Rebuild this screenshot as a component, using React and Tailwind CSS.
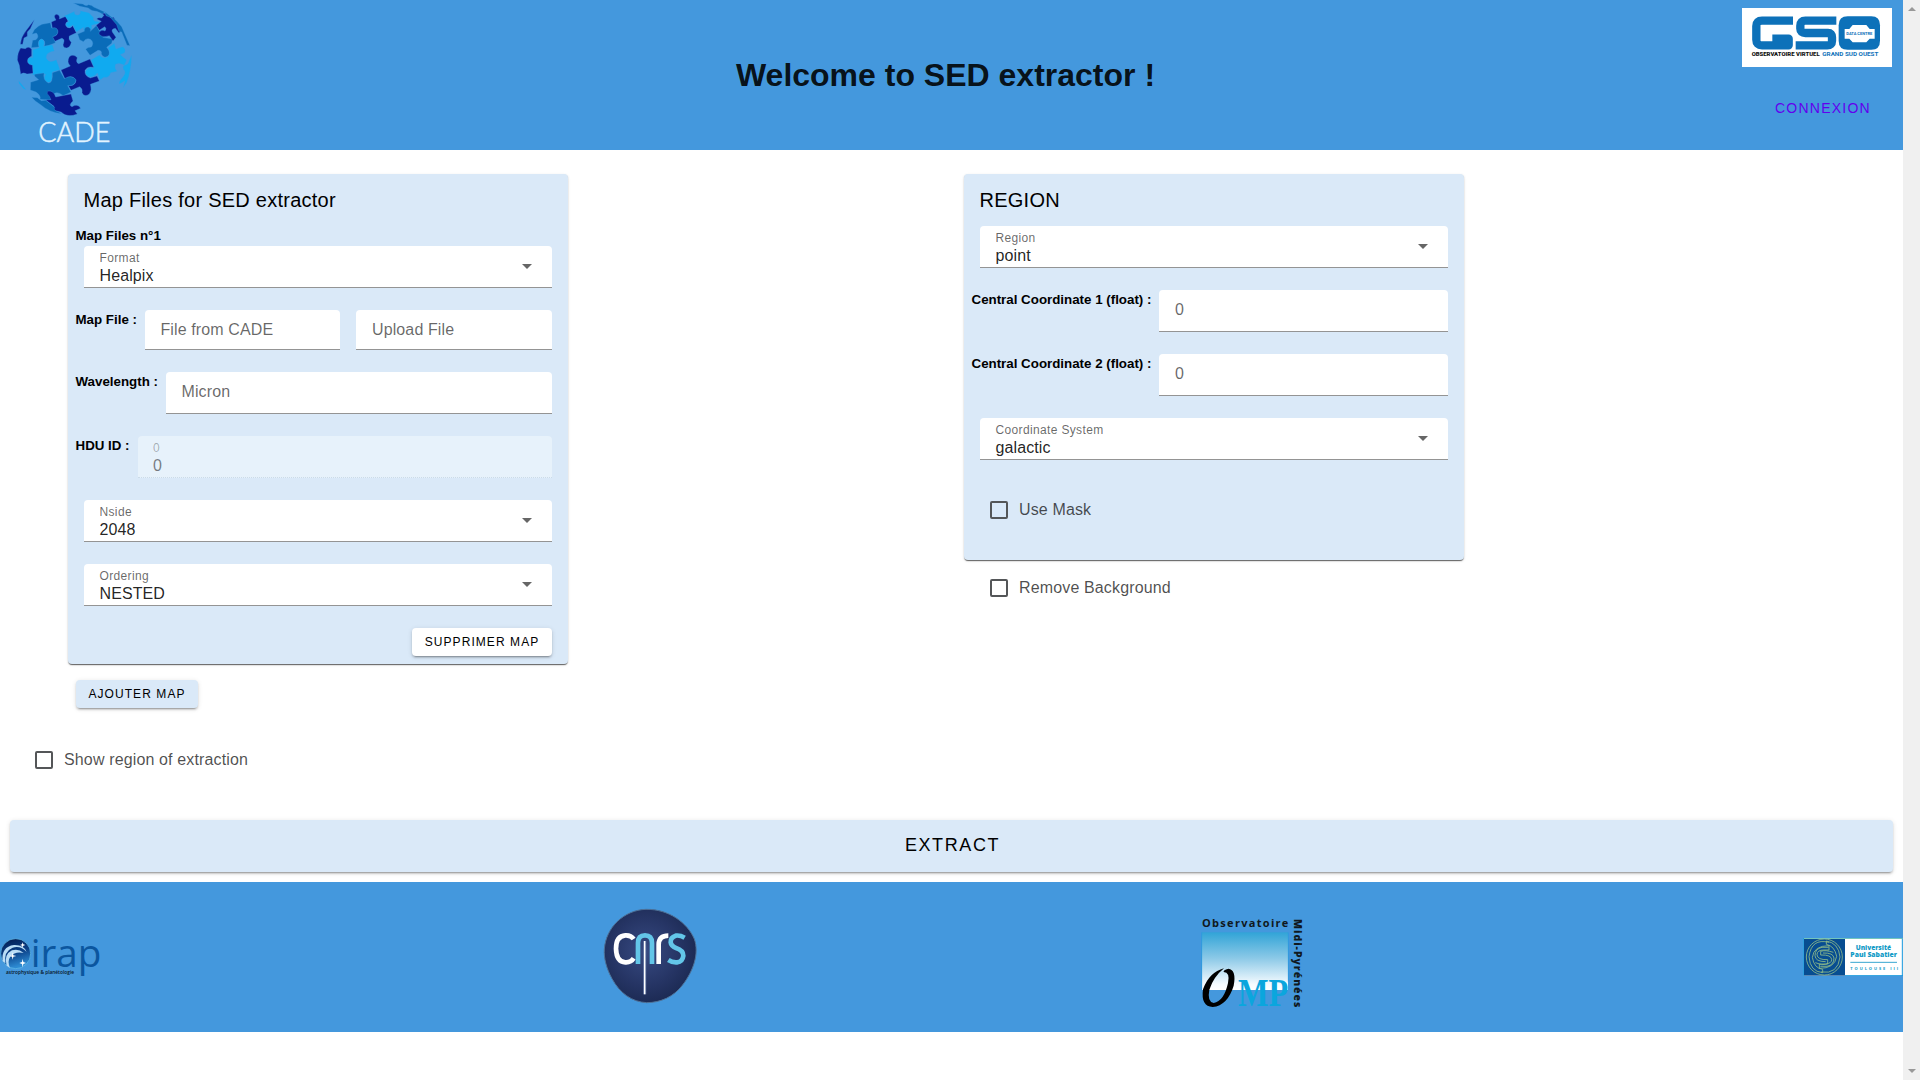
import React from "react";

const cardShadow =
  "shadow-[0_2px_1px_-1px_rgba(0,0,0,0.4),0_1px_1px_rgba(0,0,0,0.28),0_1px_3px_rgba(0,0,0,0.12)]";
const buttonShadow =
  "shadow-[0_3px_1px_-2px_rgba(0,0,0,0.2),0_2px_2px_rgba(0,0,0,0.14),0_1px_5px_rgba(0,0,0,0.12)]";

function Select({ label, value, className = "" }) {
  return (
    <div
      className={`flex h-[42px] items-center justify-between rounded-t border-b border-[#949494] bg-white pl-[15.5px] pr-[20px] ${className}`}
    >
      <div className="flex flex-col pt-[3px]">
        <span className="text-[12px] leading-[14px] tracking-[0.35px] text-black/60">{label}</span>
        <span className="mt-[1px] text-[16px] leading-[19px] tracking-[0.1px] text-black/87">{value}</span>
      </div>
      <svg className="mt-[-1px] h-[5px] w-[10px]" viewBox="0 0 10 5">
        <polygon points="0,0 10,0 5,5" fill="#666" />
      </svg>
    </div>
  );
}

function Field({ placeholder, className = "" }) {
  return (
    <div className={`rounded-t border-b border-[#949494] bg-white pl-[15.5px] pr-4 pt-[10px] ${className}`}>
      <span className="block text-[16px] leading-[19px] tracking-[0.12px] text-black/60">{placeholder}</span>
    </div>
  );
}

function Label({ children }) {
  return (
    <span className="ml-[-0.5px] mr-2 shrink-0 whitespace-nowrap pt-[2px] text-[13.333px] font-bold leading-[15px] text-black">
      {children}
    </span>
  );
}

function Checkbox({ label, className = "" }) {
  return (
    <label className={`flex h-[18px] items-center ${className}`}>
      <span className="h-[18px] w-[18px] rounded-[2px] border-2 border-[#545658]" />
      <span className="ml-[11px] text-[16px] leading-[18px] tracking-[0.14px] text-black/70">{label}</span>
    </label>
  );
}

function CadeLogo() {
  const navy = "#091b8f";
  const blue = "#0a6cb9";
  const cyan = "#10aaf0";
  return (
    <svg className="h-[150px] w-[160px]" viewBox="0 0 480 450">
      <g stroke="#4498dd" strokeWidth="1">
        <path fill={blue} d="M103 89 Q113 78 126 73 L151 68 L155 84 Q173 78 174 94 Q173 108 160 109 L166 128 L145 137 L132 140 Q139 120 124 118 Q112 121 117 141 L94 143 L98 121 L108 119 Q119 110 109 99 L96 103 Z" />
        <path fill={navy} d="M154 66 L168 60 Q158 46 169 43 Q181 45 178 57 L198 49 L204 64 Q191 71 201 82 Q211 88 218 77 L229 98 L208 108 Q204 118 214 127 Q210 144 199 144 Q185 141 191 128 Q195 117 185 115 L165 124 L158 110 Q174 108 174 93 Q170 80 157 84 Z" />
        <path fill={cyan} d="M194 47 L224 34 Q221 46 235 45 Q244 40 240 32 L267 38 L281 53 Q277 64 292 64 L301 69 L275 76 Q278 91 263 96 Q247 95 251 82 L229 96 L219 75 Q203 87 198 75 Q197 66 207 65 Z" />
        <path fill={blue} d="M233 102 L253 94 Q252 80 265 81 Q275 86 271 94 L290 76 L298 94 Q314 88 320 98 Q323 109 308 112 L338 117 L335 130 L320 142 Q334 158 325 168 Q310 177 304 162 Q307 151 294 151 L270 166 L257 148 Q263 141 274 141 Q283 129 273 119 Q260 111 250 125 L239 119 Z" />
        <path fill={navy} d="M289 76 L304 64 L290 57 Q294 51 305 54 L312 46 L304 39 Q321 38 332 53 L341 52 L350 69 L364 91 L357 99 L346 85 Q333 87 337 96 L348 112 L339 123 L328 107 Q316 111 306 109 L297 103 Q296 92 309 91 L315 93 Q321 85 314 80 L298 91 Z" />
        <path fill={cyan} d="M273 180 L298 165 Q308 178 323 171 Q334 158 324 144 L343 130 L348 147 L367 140 Q379 144 374 158 L361 164 L380 180 L373 196 Q359 187 347 193 Q342 206 352 214 L332 218 Q328 234 312 232 L300 240 L292 219 Q279 235 264 229 Q252 221 259 210 Q269 200 281 204 Z" />
        <path fill={cyan} d="M98 149 L118 143 Q111 121 124 117 Q137 120 131 139 L157 134 L163 153 Q136 157 139 174 Q147 192 169 179 L180 209 L157 216 Q155 229 156 240 Q147 254 135 243 Q129 232 137 223 L98 225 L98 200 Q81 195 82 181 Q83 170 98 173 Z" />
        <path fill={navy} d="M52 180 Q52 158 62 144 L76 146 Q87 137 95 148 L95 168 Q80 174 83 187 Q88 197 97 195 L99 220 L81 222 Q69 215 62 223 L58 196 Z" />
        <path fill={navy} d="M183 210 L211 198 Q199 185 208 170 Q220 160 232 173 Q226 187 236 191 L270 177 L281 202 Q263 197 255 211 Q253 229 271 234 L291 228 L298 243 L271 253 Q277 270 268 282 Q253 293 246 278 Q249 266 239 260 L213 271 L205 257 Q225 259 228 242 Q221 227 205 231 L195 237 Z" />
        <path fill={blue} d="M92 247 L116 239 Q100 228 104 223 L132 219 Q128 241 145 249 Q159 249 157 218 L179 211 L193 236 Q215 223 228 239 Q226 258 203 257 L213 276 L190 287 Q171 272 162 282 L170 297 L145 300 L120 298 Q124 287 108 276 L91 270 Z" />
        <path fill={navy} d="M137 300 L153 299 L148 289 Q137 279 144 273 Q161 271 167 291 L213 282 L219 303 Q204 316 216 320 Q234 310 242 325 L225 332 L232 342 Q202 354 183 336 L166 332 Q151 330 162 319 Z" />
        <path fill={blue} d="M95 292 L112 293 L124 302 L137 301 L164 322 Q159 332 174 335 L186 341 Q147 337 122 314 Q104 304 95 292 Z" />
        <path fill={blue} d="M220 9 L249 12 Q258 20 265 14 Q277 15 281 21 L314 36 L307 41 L290 34 Q275 34 265 24 L240 19 Z" />
        <path fill={navy} d="M61 133 Q63 110 79 91 L103 59 L91 86 L82 96 L82 109 L72 114 L68 133 Z" />
        <path fill={blue} d="M315 36 L350 63 L365 80 L390 137 L381 136 L365 96 L357 94 L350 74 L331 52 L318 47 Z" />
        <path fill={cyan} d="M395 165 Q394 213 380 248 L369 264 L375 242 L359 252 Q354 248 366 234 Q379 220 373 211 Q367 207 370 197 L383 192 Z" />
        <path fill={cyan} d="M56 242 L79 269 L70 266 L57 250 Z" />
      </g>
      <text x="115" y="425" fill="#e3f4ff" stroke="#e3f4ff" strokeWidth="1.5" fontFamily="Lato" fontWeight="300" fontSize="84" textLength="216" lengthAdjust="spacingAndGlyphs">CADE</text>
    </svg>
  );
}

function GsoLogo() {
  return (
    <svg className="h-[59px] w-[150px] bg-white" viewBox="0 0 450 177">
      <g fill="none" stroke="#0d71b9" strokeWidth="25" strokeLinejoin="round">
        <path d="M153 38H60Q43 38 43 54V95Q43 112 60 112H140V92H91" />
        <path d="M283 38H190Q175 38 175 53V62Q175 75 190 75H258Q270 75 270 88V99Q270 112 256 112H161" />
      </g>
      <path fill="#0d71b9" d="M317 25H388Q414 25 414 52V98Q414 125 388 125H317Q290 125 290 98V52Q290 25 317 25Z" />
      <path fill="#fff" d="M332 51H373L383 63H398V92H383L373 103H332L322 92H308V63H322Z" />
      <text x="313" y="80" fontFamily="Roboto" fontWeight="700" fontSize="12" textLength="78" fill="#0d71b9">DATA CENTRE</text>
      <text x="29" y="145" fontFamily="Roboto" fontWeight="900" fontSize="17" textLength="204" lengthAdjust="spacingAndGlyphs" fill="#111">OBSERVATOIRE VIRTUEL</text>
      <text x="241" y="145" fontFamily="Roboto" fontWeight="700" fontSize="17" textLength="168" lengthAdjust="spacingAndGlyphs" fill="#0d71b9">GRAND SUD OUEST</text>
    </svg>
  );
}

function IrapLogo() {
  return (
    <svg className="h-[80px] w-[102px]" viewBox="0 51 306 240">
      <defs>
        <linearGradient id="orb" x1="0" y1="0" x2="0.3" y2="1">
          <stop offset="0" stopColor="#03184b" />
          <stop offset="0.55" stopColor="#0a3f86" />
          <stop offset="1" stopColor="#2d8ad2" />
        </linearGradient>
      </defs>
      <circle cx="47" cy="161" r="45" fill="url(#orb)" stroke="#64bce8" strokeWidth="2" />
      <path d="M8 184Q3 140 42 135Q72 134 80 156Q62 136 38 143Q11 154 16 190Z" fill="#b9dcf5" />
      <path d="M20 197Q10 164 36 151Q56 145 71 159Q46 153 32 169Q21 183 30 204Z" fill="#b9dcf5" />
      <path d="M38 157l2 9 9 2-9 2-2 9-2-9-9-2 9-2ZM68 176l2 10 8 3-8 3-2 10-2-10-8-3 8-3ZM68 127l2 6 6 2-6 2-2 6-2-6-6-2 6-2Z" fill="#fff" />
      <text x="92" y="200" fontFamily="Open Sans" fontSize="117" textLength="212" lengthAdjust="spacingAndGlyphs" fill="#0b569f">irap</text>
      <text x="18" y="223" fontFamily="Open Sans" fontWeight="600" fontSize="17" textLength="204" lengthAdjust="spacingAndGlyphs" fill="#071426">astrophysique &amp; planétologie</text>
    </svg>
  );
}

function CnrsLogo() {
  return (
    <svg className="h-[100px] w-[100px]" viewBox="27 21 300 300">
      <defs>
        <radialGradient id="cnrs" cx="0.45" cy="0.45" r="0.6">
          <stop offset="0" stopColor="#374a82" />
          <stop offset="0.6" stopColor="#263565" />
          <stop offset="1" stopColor="#1a2850" />
        </radialGradient>
      </defs>
      <path d="M168 28C236 27 292 68 313 117C328 160 311 212 277 256C251 290 212 308 170 308C126 306 89 279 66 236C49 205 41 174 43 147C48 82 102 30 168 28Z" fill="url(#cnrs)" stroke="#4e7197" strokeWidth="3" />
      <g fill="none" strokeWidth="14">
        <path d="M131 117Q123 105 106 106Q78 108 78 146Q79 186 106 187Q123 188 131 175" stroke="#fff" />
        <path d="M144 192V129Q144 106 165 106Q186 106 186 129V192" stroke="#63c6e8" />
        <path d="M206 192V133Q207 107 235 107" stroke="#fff" />
        <path d="M284 113Q270 105 257 107Q241 112 242 127Q243 138 258 144Q280 151 280 167Q278 185 261 187Q247 188 235 180" stroke="#63c6e8" />
      </g>
      <path d="M164 123V283" stroke="#6d7ea8" strokeWidth="9" />
      <path d="M164 123V283" stroke="#fff" strokeWidth="4" />
    </svg>
  );
}

function OmpLogo() {
  return (
    <svg className="h-[120px] w-[120px]" viewBox="51 -9 360 360">
      <defs>
        <linearGradient id="sky" x1="0" y1="0" x2="0" y2="1">
          <stop offset="0" stopColor="#31a4d7" />
          <stop offset="0.45" stopColor="#8cc9e7" />
          <stop offset="0.9" stopColor="#f5fbff" />
          <stop offset="1" stopColor="#fff" />
        </linearGradient>
      </defs>
      <rect x="66" y="97" width="258" height="173" fill="url(#sky)" />
      <path d="M65 97V270M325 97V245" stroke="#279ce0" strokeWidth="2" />
      <text x="66" y="81" fontFamily="Open Sans" fontWeight="700" fontSize="33" textLength="259" fill="#101820">Observatoire</text>
      <text transform="translate(342 57) rotate(90)" fontFamily="Open Sans" fontWeight="800" fontSize="31" textLength="265" fill="#101820">Midi-Pyrénées</text>
      <path fill="#000" fillRule="evenodd" d="M132 205Q88 216 69 268Q62 320 98 321Q143 316 161 257Q170 209 145 206Q129 210 131 216Q151 217 144 249Q132 304 101 309Q81 305 88 269Q101 230 132 205Z" />
      <text x="174" y="319" fontFamily="Liberation Serif" fontWeight="700" fontSize="118" textLength="151" lengthAdjust="spacingAndGlyphs" fill="#0ba6dd">MP</text>
    </svg>
  );
}

function UniversityLogo() {
  return (
    <svg className="h-[38px] w-[100px]" viewBox="69 84 300 114">
      <rect x="69" y="84" width="300" height="114" fill="#fff" />
      <rect x="71" y="87" width="124" height="110" fill="#074d91" />
      <path d="M69 85H369" stroke="#73c5bd" strokeWidth="4" />
      <path d="M70 84V198M195 197H369M367 86V198" stroke="#1597dc" strokeWidth="3" />
      <g fill="none" stroke="#91bd89" strokeWidth="2.5">
        <circle cx="133" cy="141" r="54" />
        <path d="M147 97Q94 84 87 140Q90 185 128 188V178Q102 175 97 142Q101 107 147 107V120H132Q111 120 111 134Q112 150 143 149V162Q126 168 106 158" />
        <path d="M123 186Q174 194 180 141Q176 99 139 93V103Q164 108 170 139Q164 176 118 175V162H137Q155 160 155 149Q155 134 122 135V124Q136 119 160 127" />
        <path d="M146 112H126Q105 116 105 137Q106 155 137 155M121 169H141Q162 165 162 144Q160 128 129 129" />
      </g>
      <g fontFamily="Open Sans" fill="#129bc7">
        <text x="227" y="121" fontWeight="800" fontSize="19" textLength="106" lengthAdjust="spacingAndGlyphs">Université</text>
        <text x="211" y="141" fontWeight="800" fontSize="19" textLength="140" lengthAdjust="spacingAndGlyphs">Paul Sabatier</text>
        <text x="211" y="181" fontWeight="700" fontSize="12" textLength="143">TOULOUSE III</text>
      </g>
      <path d="M211 157H351" stroke="#38a6d0" strokeWidth="3" />
    </svg>
  );
}

export default function App() {
  return (
    <div className="flex h-[1080px] w-[1920px] overflow-hidden bg-white font-['Liberation_Sans',Arial,sans-serif] text-black">
      <div className="flex w-[1903px] flex-col">
        <header className="flex h-[150px] shrink-0 items-start justify-between bg-[#4498dd]">
          <div className="w-[300px]">
            <CadeLogo />
          </div>
          <h1 className="ml-[-12px] mt-[57px] text-[32px] font-bold leading-[37px] text-black/90">Welcome to SED extractor !</h1>
          <div className="flex w-[300px] flex-col items-end pr-[11px] pt-2">
            <GsoLogo />
            <button className="mr-[21px] mt-[33px] text-[14px] leading-4 tracking-[1.25px] text-[#6200ee]">CONNEXION</button>
          </div>
        </header>

        <main className="flex h-[732px] shrink-0 flex-col">
          <div className="flex h-[577px] shrink-0 pt-6">
            <div className="w-[964px] pl-[68px]">
              <section className={`flex h-[490px] w-[500px] flex-col rounded bg-[#dae9f8] ${cardShadow}`}>
                <h2 className="ml-[15.5px] mt-[14px] text-[20px] leading-6 tracking-[0.25px]">Map Files for SED extractor</h2>
                <h3 className="ml-[7.5px] mt-[16px] text-[13.333px] font-bold leading-[15px]">Map Files n°1</h3>
                <div className="mt-[3px] flex flex-col gap-[22px] pl-2 pr-4">
                  <Select label="Format" value="Healpix" className="ml-2" />
                  <div className="flex h-10">
                    <Label>Map File :</Label>
                    <Field placeholder="File from CADE" className="mr-4 flex-1" />
                    <Field placeholder="Upload File" className="flex-1" />
                  </div>
                  <div className="flex h-[42px]">
                    <Label>Wavelength :</Label>
                    <Field placeholder="Micron" className="flex-1" />
                  </div>
                  <div className="flex h-[42px]">
                    <Label>HDU ID :</Label>
                    <div className="flex flex-1 flex-col rounded-t border-b border-dotted border-[#cbdbe8] bg-[#e7f2fb] pl-[15.5px] pt-[5px]">
                      <span className="text-[12px] leading-[14px] text-black/30">0</span>
                      <span className="mt-[1px] text-[16px] leading-[19px] text-black/50">0</span>
                    </div>
                  </div>
                  <Select label="Nside" value="2048" className="ml-2" />
                  <Select label="Ordering" value="NESTED" className="ml-2" />
                  <button className={`h-7 w-[140px] self-end rounded bg-white text-[12px] tracking-[1.07px] ${buttonShadow}`}>
                    SUPPRIMER MAP
                  </button>
                </div>
              </section>
              <button className={`ml-2 mt-4 block h-7 w-[122px] rounded bg-[#dae9f8] text-[12px] tracking-[1.07px] ${buttonShadow}`}>
                AJOUTER MAP
              </button>
            </div>

            <div>
              <section className={`flex h-[386px] w-[500px] flex-col rounded bg-[#dae9f8] ${cardShadow}`}>
                <h2 className="ml-[15.5px] mt-[14px] text-[20px] leading-6 tracking-[0.25px]">REGION</h2>
                <div className="mt-[14px] flex flex-col gap-[22px] pl-2 pr-4">
                  <Select label="Region" value="point" className="ml-2" />
                  <div className="flex h-[42px]">
                    <Label>Central Coordinate 1 (float) :</Label>
                    <Field placeholder="0" className="flex-1" />
                  </div>
                  <div className="flex h-[42px]">
                    <Label>Central Coordinate 2 (float) :</Label>
                    <Field placeholder="0" className="flex-1" />
                  </div>
                  <Select label="Coordinate System" value="galactic" className="ml-2" />
                </div>
                <Checkbox label="Use Mask" className="ml-[26px] mt-[41px]" />
              </section>
              <Checkbox label="Remove Background" className="ml-[26px] mt-[19px]" />
            </div>
          </div>
          <Checkbox label="Show region of extraction" className="ml-[35px] mt-6 shrink-0" />
          <button className={`mx-[10px] mt-[51px] h-[52px] shrink-0 rounded bg-[#dae9f8] pb-[2px] pl-[2px] text-[18px] tracking-[1.6px] ${buttonShadow}`}>
            EXTRACT
          </button>
        </main>

        <footer className="flex h-[150px] shrink-0 items-center bg-[#4498dd]">
          <IrapLogo />
          <div className="ml-[497px]">
            <CnrsLogo />
          </div>
          <div className="ml-[498px]">
            <OmpLogo />
          </div>
          <div className="ml-auto">
            <UniversityLogo />
          </div>
        </footer>
      </div>
      <div className="flex w-[17px] flex-col items-center justify-between bg-[#f0f0f0] py-[7px]">
        <svg className="h-[4px] w-[8px]" viewBox="0 0 8 4">
          <polygon points="0,4 4,0 8,4" fill="#999" />
        </svg>
        <svg className="h-[4px] w-[8px]" viewBox="0 0 8 4">
          <polygon points="0,0 4,4 8,0" fill="#999" />
        </svg>
      </div>
    </div>
  );
}
